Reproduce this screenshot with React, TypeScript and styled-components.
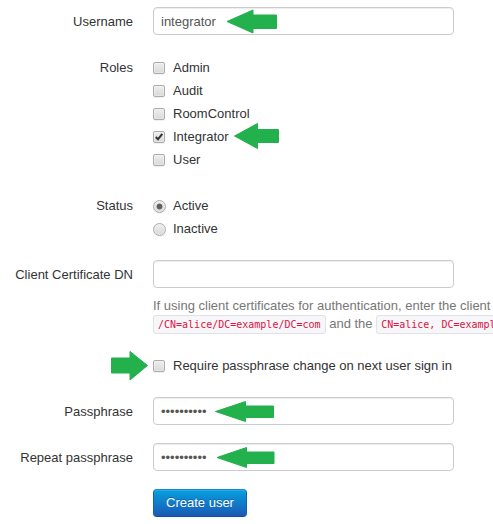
import React from 'react';
import styled, { createGlobalStyle } from 'styled-components';

const GlobalStyle = createGlobalStyle`
  body {
    margin: 0;
    background: #fff;
    overflow: hidden;
    color: #333;
    font: 13px/18px 'Liberation Sans', Arial, sans-serif;
  }
`;

const Form = styled.form`
  position: relative;
  width: 493px;
  height: 524px;
  padding-top: 7px;
  box-sizing: border-box;
  overflow: hidden;
`;

const Row = styled.div<{ $gap: number }>`
  display: grid;
  grid-template-columns: 133px 1fr;
  column-gap: 20px;
  margin-bottom: ${(p) => p.$gap}px;
`;

const Label = styled.label`
  padding-top: 6px;
  text-align: right;
  white-space: nowrap;
`;

const Field = styled.div`
  grid-column: 2;
  min-width: 0;
`;

const TextInput = styled.input`
  display: block;
  box-sizing: border-box;
  width: 301px;
  height: 28px;
  margin: 0;
  padding: 4px 7px;
  border: 1px solid #ccc;
  border-radius: 4px;
  background: #fff;
  box-shadow: inset 0 1px 1px rgba(0, 0, 0, 0.075);
  color: #555;
  font: inherit;
  outline: none;
`;

const Options = styled(Field)`
  display: flex;
  flex-direction: column;
  gap: 5px;
  padding-top: 6px;
`;

const Option = styled.label`
  display: flex;
  align-items: center;
  height: 18px;
  white-space: nowrap;
`;

const Mark = styled.input`
  appearance: none;
  display: block;
  flex: none;
  box-sizing: border-box;
  margin: 0 8px 0 0;
  border: 1px solid #acacac;
  background: linear-gradient(#eee, #d9d9d9);
  box-shadow: inset 0 0 0 1px rgba(255, 255, 255, 0.3), 0 1px 0 rgba(0, 0, 0, 0.06);

  &[type='checkbox'] {
    width: 12px;
    height: 12px;
    border-radius: 2px;
  }

  &[type='radio'] {
    width: 13px;
    height: 13px;
    margin-right: 7px;
    border-radius: 50%;
  }

  &[type='radio']:checked {
    background: radial-gradient(circle, #606060 0 2.6px, transparent 3.3px),
      linear-gradient(#eee, #d9d9d9);
  }
`;

const CheckHolder = styled.span`
  position: relative;
  display: block;
  flex: none;
  height: 12px;
  margin-bottom: 1px;
`;

const Tick = styled.svg`
  position: absolute;
  left: 0;
  top: -1px;
  width: 12px;
  height: 13px;
`;

const Help = styled.p`
  margin: 9px 0 0;
  color: #777;
  white-space: nowrap;
`;

const Code = styled.code`
  padding: 3px 4px;
  border: 1px solid #e1e1e8;
  border-radius: 3px;
  background: #f7f7f9;
  color: #d14;
  font: 10px/12px 'DejaVu Sans Mono', monospace;
`;

const Submit = styled.button`
  display: block;
  box-sizing: border-box;
  width: 94px;
  height: 28px;
  padding: 0;
  border: 1px solid;
  border-color: #0b8bc9 #1461ad #134f9c;
  border-radius: 4px;
  background: linear-gradient(#069fdf, #1b59b4);
  box-shadow: inset 0 1px 0 rgba(255, 255, 255, 0.15), 0 1px 2px rgba(0, 0, 0, 0.05);
  color: #fff;
  font: inherit;
  text-shadow: 0 -1px 0 rgba(0, 0, 0, 0.25);
`;

const Annotations = styled.svg`
  position: absolute;
  inset: 0;
  pointer-events: none;
  fill: #22b14c;
  stroke: #22b14c;
  stroke-width: 1;
  stroke-linejoin: round;
`;

function Checkbox({ label, checked }: { label: string; checked?: boolean }) {
  return (
    <Option>
      <CheckHolder>
        <Mark type="checkbox" defaultChecked={checked} />
        {checked && (
          <Tick viewBox="0 0 12 13">
            <path d="M2.8 7.1 5 9.3 9.3 3.9" fill="none" stroke="#333" strokeWidth="2.1" />
          </Tick>
        )}
      </CheckHolder>
      {label}
    </Option>
  );
}

function Radio({ label, checked }: { label: string; checked?: boolean }) {
  return (
    <Option>
      <Mark type="radio" name="status" defaultChecked={checked} />
      {label}
    </Option>
  );
}

const arrows = [
  'M227 21.5 253 10V15H276.5V28.5H253V33Z',
  'M234.5 136 257.5 123.5V129.5H278.5V142.5H257.5V148.5Z',
  'M147.5 365.5 130 351.5V358H111.5V373H130V380Z',
  'M215.5 411.5 245.5 401.5V406H273.5V417.5H245.5V421.5Z',
  'M217 457.5 246.5 447.5V452H274V463.5H246.5V467.5Z',
];

export default function App() {
  return (
    <>
      <GlobalStyle />
      <Form>
        <Row $gap={18}>
          <Label>Username</Label>
          <TextInput defaultValue="integrator" />
        </Row>
        <Row $gap={22}>
          <Label>Roles</Label>
          <Options>
            <Checkbox label="Admin" />
            <Checkbox label="Audit" />
            <Checkbox label="RoomControl" />
            <Checkbox label="Integrator" checked />
            <Checkbox label="User" />
          </Options>
        </Row>
        <Row $gap={22}>
          <Label>Status</Label>
          <Options>
            <Radio label="Active" checked />
            <Radio label="Inactive" />
          </Options>
        </Row>
        <Row $gap={18}>
          <Label>Client Certificate DN</Label>
          <Field>
            <TextInput />
            <Help>
              If using client certificates for authentication, enter the client
              <br />
              <Code>/CN=alice/DC=example/DC=com</Code> and the{' '}
              <Code>CN=alice, DC=example, DC=com</Code>
            </Help>
          </Field>
        </Row>
        <Row $gap={22}>
          <Options>
            <Checkbox label="Require passphrase change on next user sign in" />
          </Options>
        </Row>
        <Row $gap={18}>
          <Label>Passphrase</Label>
          <TextInput type="password" defaultValue="passphrase" />
        </Row>
        <Row $gap={18}>
          <Label>Repeat passphrase</Label>
          <TextInput type="password" defaultValue="passphrase" />
        </Row>
        <Row $gap={0}>
          <Field>
            <Submit type="button">Create user</Submit>
          </Field>
        </Row>
        <Annotations width="493" height="524" viewBox="0 0 493 524">
          {arrows.map((d) => (
            <path key={d} d={d} />
          ))}
        </Annotations>
      </Form>
    </>
  );
}
